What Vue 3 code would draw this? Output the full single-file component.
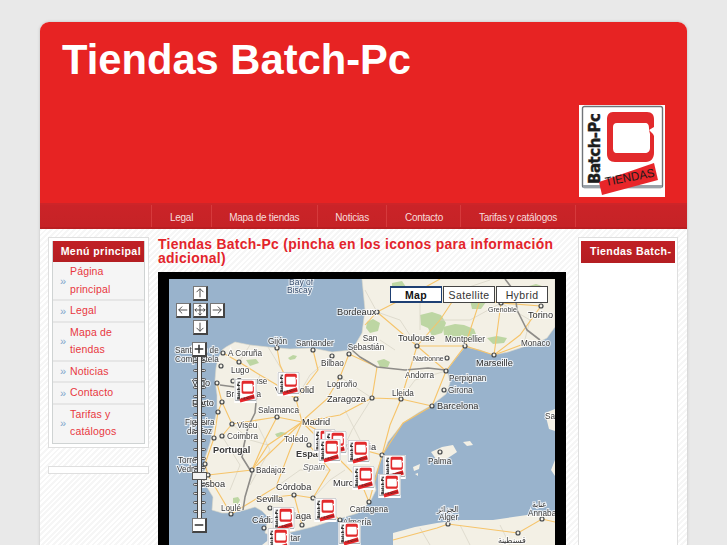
<template>
  <div class="page">
    <div class="wrapper">
      <header class="header">
        <h1 class="site-title">Tiendas Batch-Pc</h1>
        <svg class="logo" viewBox="0 0 86 92" width="86" height="92">
          <use href="#shop-logo" />
        </svg>
      </header>

      <nav class="topnav">
        <a v-for="item in navItems" :key="item" class="topnav-link">{{ item }}</a>
      </nav>

      <div class="content">
        <aside class="left">
          <div class="box">
            <div class="box-inner">
              <div class="box-title">Menú principal</div>
              <ul class="menu">
                <li v-for="item in menuItems" :key="item">
                  <span class="chev">»</span>
                  <a class="menu-link">{{ item }}</a>
                </li>
              </ul>
            </div>
          </div>
          <div class="box box-empty"></div>
        </aside>

        <main class="main">
          <h2 class="heading">Tiendas Batch-Pc (pincha en los iconos para información adicional)</h2>
          <div class="map-frame">
            <div class="map">
              <svg class="map-svg" viewBox="169 279 386 290" width="386" height="290">
                <defs>
                  <symbol id="shop-logo" viewBox="0 0 86 92">
                    <rect width="86" height="92" fill="#fff" />
                    <rect x="3.5" y="1.5" width="80" height="81" rx="2" fill="#fff" stroke="#6f7378" stroke-width="1.4" />
                    <rect x="4" y="80" width="79" height="3" fill="#9aa1a8" />
                    <text class="logo-name" transform="translate(21 79) rotate(-90)" textLength="71" lengthAdjust="spacing">Batch-Pc</text>
                    <path d="M34 7h34c5 0 7 3 7 7v8l-5 3 4 4 1 2v17c0 5-3 9-8 9H36c-5 0-8-3-8-8V14c0-4 2-7 6-7z" fill="#e22a2c" />
                    <path d="M38 18h28c3 0 4 2 4 5v2l1 4v14c0 3-2 5-5 5H38c-3 0-4-2-4-5V22c0-2 1-4 4-4z" fill="#fff" />
                    <path d="M20 77 75 58l4 17-56 15z" fill="#e8262a" />
                    <text class="logo-sub" transform="translate(27 81) rotate(-11)" textLength="50" lengthAdjust="spacingAndGlyphs">TIENDAS</text>
                  </symbol>
                </defs>

                <rect x="169" y="279" width="386" height="290" fill="#99b3cc" />
                <path fill="#f3f0e5" stroke="#dcd8ca" stroke-width=".6" d="M362 279 365 310 362 333 352 350 332 352 312 348 290 349 268 347 250 345 235 342 226 347 222 350 218 358 216 368 215 380 217 395 217 410 213 428 210 443 205 458 205 470 198 477 205 484 213 497 212 510 222 513 232 513 245 510 255 507 262 511 268 517 265 533 277 538 288 533 300 530 312 527 328 522 342 518 358 513 370 502 376 490 374 478 382 457 388 442 403 423 418 413 432 405 446 394 450 383 447 370 456 358 465 347 480 350 493 355 508 352 523 347 535 344 547 338 555 327 555 279Z" />
                <path fill="#f3f0e5" d="M393 569 393 533 415 527 437 523 460 520 493 520 527 515 555 512 555 569Z" />
                <path fill="#f3f0e5" d="M431 452 442 447 453 445 457 452 448 458 443 461 436 459ZM463 442 470 441 473 445 467 446ZM413 467 420 464 419 469 414 471ZM415 474 418 473 418 476ZM545 413 555 409 555 431 549 429ZM555 460 551 470 555 476ZM262 569 262 545 271 538 278 569Z" />

                <g fill="#bdd6a3">
                  <path v-for="(g, i) in greens" :key="i" :d="g" />
                </g>

                <g fill="none" stroke="#d9d5c8" stroke-width=".8">
                  <polyline v-for="(road, i) in minorRoads" :key="i" :points="road" />
                </g>
                <g fill="none" stroke="#f6c46a" stroke-width="1.1">
                  <polyline v-for="(road, i) in roads" :key="i" :points="road" />
                </g>
                <g fill="none" stroke="#8e8c88" stroke-width="1.6" stroke-linejoin="round">
                  <polyline points="220,385 235,387 250,386 257,392 255,413 248,427 244,445 242,457 252,473 245,497 243,510" />
                  <polyline points="352,350 360,357 377,367 405,370 428,368 445,370" />
                  <polyline points="517,310 527,330 540,340" />
                  <polyline points="505,279 515,292 517,310" />
                </g>

                <g fill="#f3f0e5" stroke="#45484b" stroke-width="1.2">
                  <circle v-for="(c, i) in cities" :key="i" :cx="c[0]" :cy="c[1]" r="2" />
                </g>

                <text
                  v-for="l in labels"
                  :key="l.t"
                  class="map-label"
                  :class="l.c"
                  :x="l.x"
                  :y="l.y + 3"
                  :text-anchor="l.a || 'start'"
                >{{ l.t }}</text>

                <use
                  v-for="(m, i) in markers"
                  :key="i"
                  href="#shop-logo"
                  :x="m[0]"
                  :y="m[1]"
                  width="23"
                  height="24"
                />
              </svg>

              <div class="pan">
                <button class="ctl c-up"><svg viewBox="0 0 14 14"><path d="M7 12V2M3 6l4-4 4 4" /></svg></button>
                <button class="ctl c-left"><svg viewBox="0 0 14 14"><path d="M12 7H2M6 3 2 7l4 4" /></svg></button>
                <button class="ctl c-mid"><svg viewBox="0 0 14 14"><path d="M7 1v12M1 7h12M5 3l2-2 2 2M5 11l2 2 2-2M3 5 1 7l2 2M11 5l2 2-2 2" /></svg></button>
                <button class="ctl c-right"><svg viewBox="0 0 14 14"><path d="M2 7h10M8 3l4 4-4 4" /></svg></button>
                <button class="ctl c-down"><svg viewBox="0 0 14 14"><path d="M7 2v10M3 8l4 4 4-4" /></svg></button>
              </div>

              <div class="zoom">
                <button class="ctl"><svg viewBox="0 0 14 14"><path class="thick" d="M7 2v10M2 7h10" /></svg></button>
                <div class="zoom-track">
                  <span v-for="n in 18" :key="n" class="zoom-tick"></span>
                  <span class="zoom-rail"></span>
                  <span class="zoom-thumb"></span>
                </div>
                <button class="ctl"><svg viewBox="0 0 14 14"><path class="thick" d="M2 7h10" /></svg></button>
              </div>

              <div class="map-types">
                <button class="map-type active">Map</button>
                <button class="map-type">Satellite</button>
                <button class="map-type">Hybrid</button>
              </div>
            </div>
          </div>
        </main>

        <aside class="right">
          <div class="box box-tall">
            <div class="box-title box-title-right">Tiendas Batch-</div>
          </div>
        </aside>
      </div>
    </div>
  </div>
</template>

<script setup>
const navItems = ['Legal', 'Mapa de tiendas', 'Noticias', 'Contacto', 'Tarifas y catálogos']
const menuItems = ['Página principal', 'Legal', 'Mapa de tiendas', 'Noticias', 'Contacto', 'Tarifas y catálogos']

const greens = [
  'M367 322l6-3 7 4-2 8-8 2-4-5z',
  'M420 315l12-3 9 3 5 8-4 10-10 3-4-8-7-3z',
  'M443 327l12-3 9 1 10 4 3 8-9 4-8-4-9 3-7-5z',
  'M487 338l10-2 10 2-3 5-11 1z',
  'M377 361l7-2 6 3-2 5-8 0z',
  'M288 358l5-3 4 1-2 3-5 1z',
  'M275 434l6-2 6 1-3 3-7 1z',
  'M233 498l5-1 2 3-2 4-5-1z',
  'M522 288l14-4 12 4-4 9-14 3-8-5z',
  'M470 300l10-3 6 5-5 7-9 0z',
  'M392 283l10-2 4 6-6 5-8-3z',
  'M246 360l10-1 3 4-9 3z'
]

const roads = [
  '223,353 239,362 260,375 277,385 296,399 302,422',
  '277,348 280,365 296,399',
  '313,350 318,370 296,399',
  '349,354 340,377 327,399 301,422',
  '349,354 377,367 372,398 401,399 432,406',
  '372,398 340,415 302,422 290,450 276,487 256,499 231,514',
  '302,422 330,450 360,480 369,502',
  '302,422 345,445 382,455 403,423 432,406',
  '217,383 222,402 218,412 214,438 205,464 208,475',
  '208,475 252,470 302,422',
  '208,475 231,514',
  '256,499 294,495 313,498 340,520',
  '294,495 302,525',
  '222,402 232,424 277,417 302,422',
  '232,424 222,436',
  '432,406 446,371 465,346 494,355 521,345',
  '465,346 417,346 377,312',
  '417,346 446,371',
  '417,346 401,399',
  '417,346 440,320 460,290',
  '377,312 420,290 440,279',
  '494,355 501,303 541,306',
  '365,325 377,312',
  '465,346 480,300 501,303',
  '393,540 437,528 448,524 518,533 542,519 555,522',
  '382,455 369,502',
  '401,399 390,425 382,455',
  '302,422 268,445 252,470',
  '277,417 265,440 252,470',
  '309,445 330,470 313,498',
  '541,306 520,335 494,355'
]

const minorRoads = [
  '239,362 250,345', '260,375 250,400', '296,399 310,375 332,356', '340,377 372,398',
  '232,424 250,440 268,445', '222,436 240,465 230,490', '313,498 330,480 345,470',
  '276,487 300,470 330,470', '372,398 352,430 345,445', '401,399 415,380 446,371',
  '377,312 400,320 417,346', '440,320 470,320 501,303', '377,312 365,290',
  '420,290 420,330', '460,290 490,280', '501,303 530,320 523,347', '395,350 380,340',
  '345,410 360,440', '285,375 268,347', '255,420 270,450 250,485', '420,528 430,545',
  '460,525 470,545', '500,525 510,545'
]

const cities = [
  [223, 353], [239, 362], [221, 366], [277, 348], [313, 350], [332, 356], [349, 354], [340, 377],
  [296, 399], [217, 383], [233, 381], [222, 402], [218, 412], [277, 417], [232, 424], [214, 438],
  [222, 436], [309, 445], [205, 464], [208, 475], [252, 470], [294, 495], [313, 498], [270, 508],
  [231, 514], [264, 528], [302, 525], [340, 520], [377, 312], [417, 346], [465, 346], [494, 355],
  [447, 358], [446, 371], [444, 390], [372, 398], [401, 399], [432, 406], [382, 455], [440, 452],
  [369, 502], [448, 524], [542, 519], [541, 306], [518, 533], [501, 303]
]

const labels = [
  { t: 'Bay of', x: 289, y: 282, c: 'sea' },
  { t: 'Biscay', x: 287, y: 290, c: 'sea' },
  { t: 'Bordeaux', x: 337, y: 312, c: 'big' },
  { t: 'Gijón', x: 268, y: 341 },
  { t: 'Santander', x: 296, y: 343 },
  { t: 'San', x: 370, y: 338, a: 'middle' },
  { t: 'Sebastián', x: 366, y: 347, a: 'middle' },
  { t: 'A Coruña', x: 228, y: 353 },
  { t: 'Santiago de', x: 175, y: 350 },
  { t: 'Compostela', x: 175, y: 359 },
  { t: 'Lugo', x: 231, y: 370 },
  { t: 'Bilbao', x: 321, y: 363 },
  { t: 'Logroño', x: 327, y: 384 },
  { t: 'Zaragoza', x: 327, y: 399, c: 'big' },
  { t: 'Vigo', x: 192, y: 383, c: 'big' },
  { t: 'Ourense', x: 236, y: 381 },
  { t: 'Valladolid', x: 275, y: 390, c: 'big' },
  { t: 'Bragança', x: 226, y: 394 },
  { t: 'Porto', x: 192, y: 403, c: 'big' },
  { t: 'Salamanca', x: 258, y: 410 },
  { t: 'Madrid', x: 302, y: 422, c: 'big' },
  { t: 'Figueira', x: 185, y: 422 },
  { t: 'da Foz', x: 187, y: 431 },
  { t: 'Viseu', x: 237, y: 425 },
  { t: 'Coimbra', x: 227, y: 436 },
  { t: 'Toledo', x: 284, y: 439 },
  { t: 'Portugal', x: 213, y: 450, c: 'country' },
  { t: 'España', x: 296, y: 454, c: 'country' },
  { t: 'Spain', x: 303, y: 467, c: 'alt' },
  { t: 'Torres', x: 178, y: 460 },
  { t: 'Vedras', x: 177, y: 469 },
  { t: 'Badajoz', x: 256, y: 470 },
  { t: 'Lisboa', x: 198, y: 484, c: 'big' },
  { t: 'Córdoba', x: 276, y: 487, c: 'big' },
  { t: 'Murcia', x: 333, y: 483, c: 'big' },
  { t: 'Sevilla', x: 256, y: 499, c: 'big' },
  { t: 'Loulé', x: 221, y: 508 },
  { t: 'Cádiz', x: 252, y: 520, c: 'big' },
  { t: 'Málaga', x: 281, y: 516, c: 'big' },
  { t: 'Gibraltar', x: 300, y: 538, a: 'end' },
  { t: 'Almería', x: 371, y: 522, a: 'end' },
  { t: 'Cartagena', x: 388, y: 509, a: 'end' },
  { t: 'Valencia', x: 376, y: 447, a: 'end', c: 'big' },
  { t: 'Toulouse', x: 398, y: 338, c: 'big' },
  { t: 'Montpellier', x: 445, y: 339 },
  { t: 'Grenoble', x: 488, y: 309, c: 'small' },
  { t: 'Torino', x: 528, y: 315, c: 'big' },
  { t: 'Monaco', x: 521, y: 343 },
  { t: 'Narbonne', x: 413, y: 358, c: 'small' },
  { t: 'Marseille', x: 476, y: 363, c: 'big' },
  { t: 'Andorra', x: 405, y: 375 },
  { t: 'Perpignan', x: 449, y: 378 },
  { t: 'Girona', x: 448, y: 390 },
  { t: 'Lleida', x: 392, y: 393 },
  { t: 'Barcelona', x: 437, y: 406, c: 'big' },
  { t: 'Palma', x: 428, y: 461 },
  { t: 'Sa', x: 545, y: 416 },
  { t: 'الجزائر', x: 437, y: 509 },
  { t: 'Alger', x: 439, y: 517 },
  { t: 'عنابة', x: 532, y: 504 },
  { t: 'Annaba', x: 528, y: 513 },
  { t: 'قسنطينة', x: 498, y: 540 }
]

const markers = [
  [234, 379], [277, 372], [313, 429], [324, 431], [318, 439], [347, 440], [352, 466],
  [383, 455], [378, 474], [314, 498], [272, 507], [267, 528], [338, 522]
]
</script>

<style>
html, body {
  margin: 0;
  height: 545px;
  overflow: hidden;
  background: #e9e9e9;
}
</style>

<style scoped>
.page {
  padding: 22px 40px 0;
  font-family: "Liberation Sans", Arial, sans-serif;
}

.wrapper {
  border-radius: 9px 9px 0 0;
  overflow: hidden;
  box-shadow: 0 0 3px #bcbcbc;
  background: repeating-linear-gradient(135deg, #fff 0, #fff 2px, #f6f6f6 2px, #f6f6f6 4px);
}

.header {
  height: 181px;
  background: #e72323;
  display: flex;
  justify-content: space-between;
  align-items: flex-end;
  padding: 0 22px 6px 22px;
  box-sizing: border-box;
}

.site-title {
  align-self: flex-start;
  margin: 15px 0 0;
  color: #fff;
  font-size: 41.7px;
  line-height: 46px;
  font-weight: bold;
}

.logo {
  display: block;
}

.topnav {
  height: 26px;
  box-sizing: border-box;
  display: flex;
  justify-content: center;
  background: linear-gradient(#cb2328, #c82327 50%, #c62226);
  border-top: 2px solid #cd2529;
  border-bottom: 2px solid #b91f22;
}

.topnav-link {
  padding: 0 17.5px;
  border-left: 1px solid #d63a3c;
  color: #f7dcdc;
  font-size: 10px;
  letter-spacing: -.25px;
  line-height: 25px;
}

.topnav-link:last-child {
  border-right: 1px solid #d63a3c;
}

.content {
  display: grid;
  grid-template-columns: 101px 408px 103px;
  column-gap: 9px;
  padding: 8px 9px 0 8px;
}

.right {
  margin-left: 3px;
}

.box {
  box-sizing: border-box;
  border: 1px solid #dfdfdf;
  padding: 3px;
  background: #fff;
}

.box-inner {
  border: 1px solid #cfd3d3;
  border-top: 0;
  background: #f5f5f5;
}

.box-empty {
  height: 8px;
  padding: 0;
  margin-top: 18px;
}

.box-tall {
  height: 320px;
  padding: 3px 2px;
}

.box-title {
  height: 21px;
  background: linear-gradient(#c12025, #b41e22);
  color: #fff;
  font-size: 10.6px;
  font-weight: bold;
  letter-spacing: .4px;
  line-height: 21px;
  text-align: right;
  padding-right: 3px;
  white-space: nowrap;
}

.box-title-right {
  height: 22px;
  line-height: 21px;
  padding: 0 5px 0 9px;
  overflow: hidden;
  text-align: left;
}

.menu {
  list-style: none;
  margin: 0;
  padding: 0;
}

.menu li {
  display: flex;
  align-items: center;
  padding: 1px 0 1px 7px;
  border-bottom: 2px solid #e6e6e6;
}

.menu li:last-child {
  border-bottom: 0;
  padding-bottom: 2px;
}

.chev {
  flex: none;
  width: 10px;
  color: #7fa6cc;
  font-size: 11px;
}

.menu-link {
  color: #e8383f;
  font-size: 10.5px;
  line-height: 17.5px;
  letter-spacing: .15px;
}

.heading {
  margin: 0 0 7px;
  color: #e3242b;
  font-size: 13.9px;
  line-height: 14px;
  letter-spacing: .3px;
  font-weight: bold;
}

.map-frame {
  background: #000;
  padding: 7px 11px;
}

.map {
  position: relative;
  width: 386px;
  height: 290px;
  overflow: hidden;
}

.map-svg {
  display: block;
  filter: blur(.35px);
}

.map-label {
  font-family: "Liberation Sans", Arial, sans-serif;
  font-size: 8.2px;
  fill: #3b3b3b;
  stroke: #fff;
  stroke-opacity: .75;
  stroke-width: 2px;
  paint-order: stroke;
}

.map-label.big {
  font-size: 9.2px;
  fill: #2c2c2c;
}

.map-label.small {
  font-size: 7px;
}

.map-label.sea {
  fill: #3a4f6e;
  font-size: 8.5px;
}

.map-label.country {
  font-size: 9.2px;
  font-weight: bold;
}

.map-label.alt {
  font-style: italic;
  fill: #666;
  font-size: 8.6px;
}

.logo-name {
  font-family: "DejaVu Sans", sans-serif;
  font-weight: bold;
  font-size: 15px;
  fill: #1c1c1c;
  stroke: #1c1c1c;
  stroke-width: .4px;
}

.logo-sub {
  font-family: "Liberation Sans", Arial, sans-serif;
  font-size: 12px;
  fill: #1a1a1a;
}

.ctl {
  display: block;
  box-sizing: border-box;
  width: 15px;
  height: 15px;
  padding: 0;
  background: #fff;
  border: 1px solid #777;
  border-right: 2px solid #444;
  border-bottom: 2px solid #444;
}

.ctl svg {
  display: block;
  width: 12px;
  height: 12px;
}

.ctl path {
  fill: none;
  stroke: #333;
  stroke-width: 1;
}

.ctl path.thick {
  stroke-width: 1.8;
}

.pan {
  position: absolute;
  left: 7px;
  top: 7px;
  display: grid;
  grid-template-columns: 15px 15px 15px;
  grid-template-rows: 15px 15px 15px;
  gap: 2px;
}

.c-up { grid-area: 1 / 2; }
.c-left { grid-area: 2 / 1; }
.c-mid { grid-area: 2 / 2; }
.c-right { grid-area: 2 / 3; }
.c-down { grid-area: 3 / 2; }

.zoom {
  position: absolute;
  left: 23px;
  top: 63px;
  display: flex;
  flex-direction: column;
  align-items: center;
  width: 15px;
}

.zoom-track {
  position: relative;
  width: 15px;
  height: 161px;
  box-sizing: border-box;
  padding-top: 3px;
  display: flex;
  flex-direction: column;
  align-items: center;
  gap: 5.8px;
}

.zoom-tick {
  width: 13px;
  height: 3px;
  box-sizing: border-box;
  border: 1px solid #555;
  border-radius: 2px;
  background: #ddd;
  flex: none;
}

.zoom-rail {
  position: absolute;
  left: 5px;
  top: 0;
  bottom: 0;
  width: 5px;
  box-sizing: border-box;
  background: #f4f4f4;
  border-left: 1px solid #444;
  border-right: 1px solid #444;
}

.zoom-thumb {
  position: absolute;
  left: 0;
  top: 115px;
  width: 15px;
  height: 8px;
  box-sizing: border-box;
  background: #f2f2f2;
  border: 1px solid #555;
}

.map-types {
  position: absolute;
  left: 221px;
  top: 7px;
  display: flex;
  gap: 1px;
}

.map-type {
  width: 52px;
  height: 17px;
  padding: 0;
  box-sizing: border-box;
  background: #fff;
  border: 1px solid #444;
  color: #333;
  font-family: "Liberation Sans", Arial, sans-serif;
  font-size: 10.5px;
  letter-spacing: .4px;
  line-height: 14px;
}

.map-type.active {
  border-color: #1e3f73;
  border-width: 2px 1px;
  font-weight: bold;
  color: #111;
}
</style>
